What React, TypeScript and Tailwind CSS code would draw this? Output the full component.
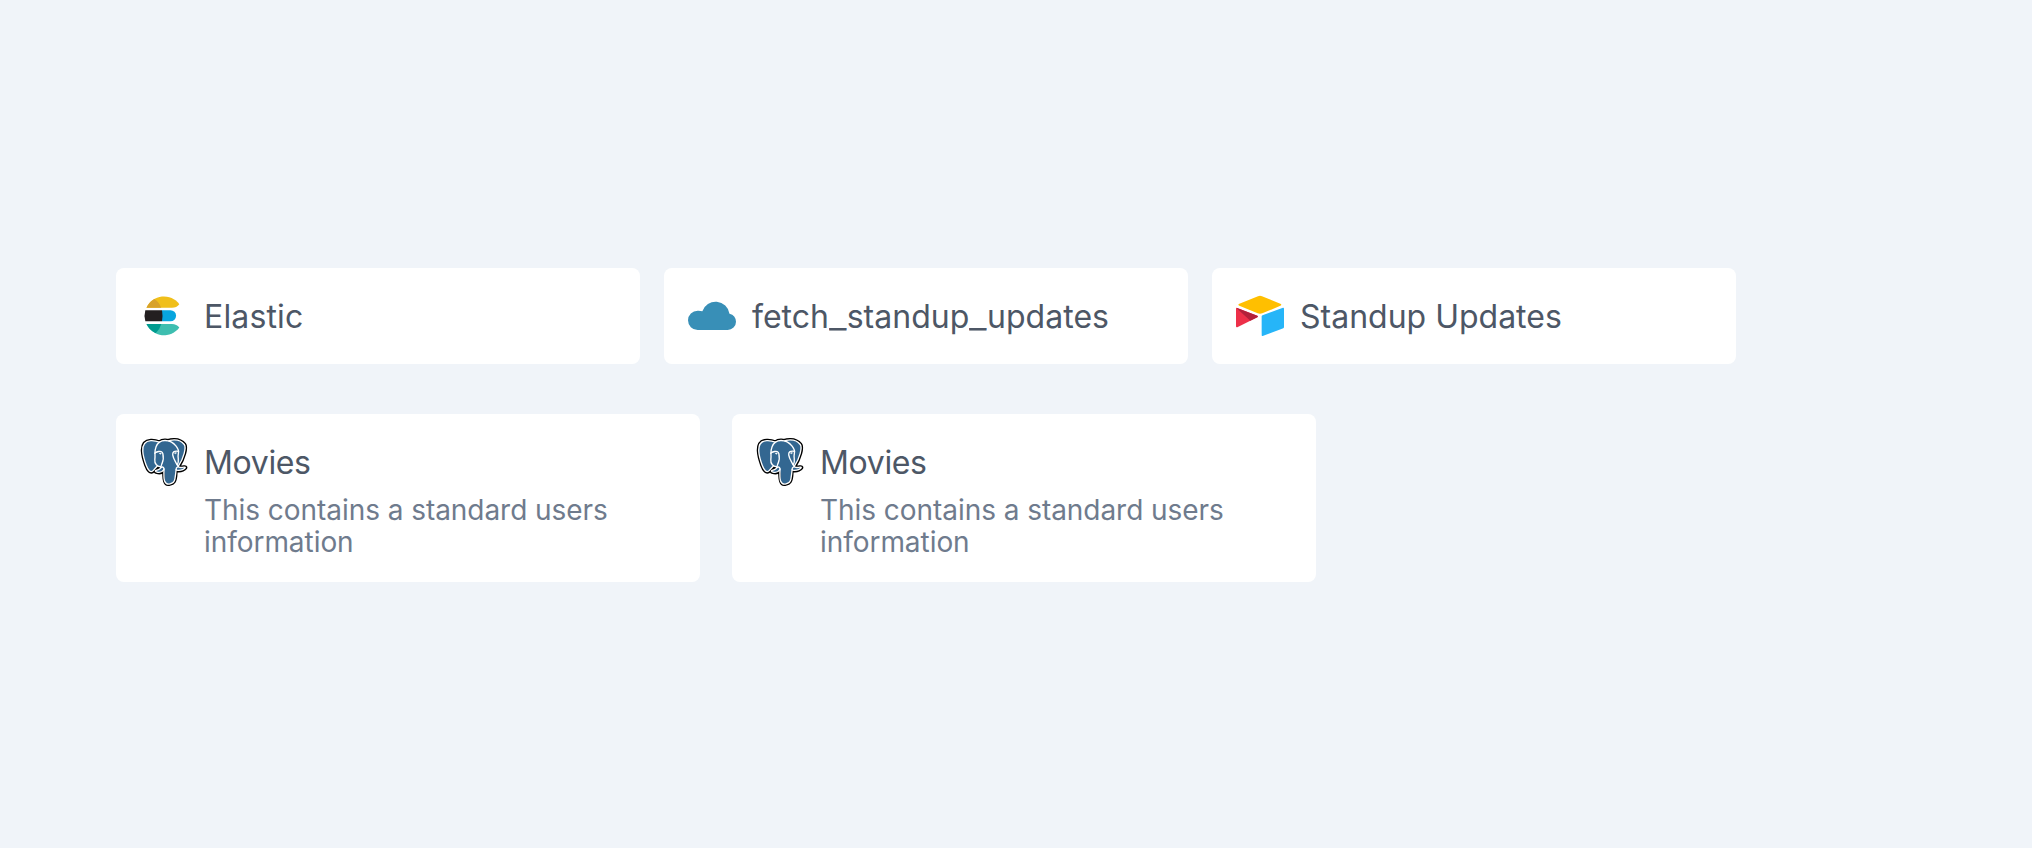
import { Fragment, type ReactNode } from "react";

function ElasticIcon() {
  return (
    <svg viewBox="30 36 144 144" className="size-12 shrink-0">
      <path d="M49.500 83A57.500 57.500 0 0 1 148 72.500Q140 83 126 83Z" fill="#f0bf1a" />
      <path d="M49.500 83A57.500 57.500 0 0 1 73 57Q88 67 93.500 83Z" fill="#d8a22a" />
      <path d="M96 90.500H121.500A16.700 16.700 0 0 1 121.500 124H96Z" fill="#07a5de" />
      <path d="M46 90.500H96Q99 107 96 124H46Q41 107 46 90.500Z" fill="#231f20" />
      <path d="M49.500 132A57.500 57.500 0 0 0 148 142.500Q140 132 126 132Z" fill="#3ebeb0" />
      <path d="M49.500 132A57.500 57.500 0 0 0 77 159.500Q89 149 94 132Z" fill="#019b8f" />
    </svg>
  );
}

function CloudIcon() {
  return (
    <svg viewBox="24 36 144 144" className="size-12 shrink-0" fill="#388fb7">
      <path d="M53 150A29 29 0 0 1 24 121A29 29 0 0 1 53 92Q60 91.500 67 94A42 42 0 0 1 148.500 101A26 26 0 0 1 168 125A25 25 0 0 1 143 150Z" />
    </svg>
  );
}

function AirtableIcon() {
  return (
    <svg viewBox="33 36 144 144" className="size-12 shrink-0">
      <path d="M99 48.500Q105 46 111 48.500L166 71.500Q172 74.500 166 77.500L112 100Q105 102.500 98 100L43 77.500Q37 74.500 43 71.500Z" fill="#ffbf00" />
      <path d="M110 109.500Q110 107 112.500 106L174 83Q177 82.500 177 85V141Q177 143.500 175 144.500L113 168Q110 169 110 166Z" fill="#26b5f8" />
      <path d="M33 86Q33 82.500 37 84L97 107.500Q101 109.500 97 112L37 141.500Q33 143 33 139Z" fill="#ed3049" />
      <path d="M35 84.500Q36 83.500 38 84.500L97 107.500Q101 109.500 97 112L76 122Z" fill="#b3213a" />
    </svg>
  );
}

function PostgresIcon() {
  return (
    <svg viewBox="0 0 432.071 445.383" className="size-12 shrink-0">
      <path
        d="M323.205,324.227c2.833-23.601,1.984-27.062,19.563-23.239l4.463,0.392c13.517,0.615,31.199-2.174,41.587-7c22.362-10.376,35.622-27.7,13.572-23.148c-50.297,10.376-53.755-6.655-53.755-6.655c53.111-78.803,75.313-178.836,56.149-203.322C352.514-5.534,262.036,26.049,260.522,26.869l-0.482,0.089c-9.938-2.062-21.06-3.294-33.554-3.496c-22.761-0.374-40.032,5.967-53.133,15.904c0,0-161.408-66.498-153.899,83.628c1.597,31.936,45.777,241.655,98.47,178.31c19.259-23.163,37.871-42.748,37.871-42.748c9.242,6.14,20.307,9.272,31.912,8.147l0.897-0.765c-0.281,2.876-0.157,5.689,0.359,9.019c-13.572,15.167-9.584,17.83-36.723,23.416c-27.457,5.659-11.326,15.734-0.797,18.367c12.768,3.193,42.305,7.716,62.268-20.224l-0.795,3.188c5.325,4.26,4.965,30.619,5.72,49.452c0.756,18.834,2.017,36.409,5.856,46.771c3.839,10.36,8.369,37.05,44.036,29.406c29.809-6.388,52.6-15.582,54.677-101.107"
        fill="#000"
        stroke="#000"
        strokeWidth="37.4"
      />
      <path
        d="M402.395,271.23c-50.302,10.376-53.76-6.655-53.76-6.655c53.111-78.808,75.313-178.843,56.153-203.326C352.547-5.532,262.073,26.049,260.552,26.867l-0.486,0.093c-9.938-2.063-21.06-3.292-33.56-3.496c-22.761-0.373-40.026,5.967-53.127,15.902c0,0-161.411-66.495-153.904,83.63c1.597,31.938,45.776,241.657,98.471,178.312c19.26-23.163,37.869-42.748,37.869-42.748c9.243,6.14,20.308,9.272,31.908,8.147l0.901-0.765c-0.28,2.876-0.152,5.689,0.361,9.019c-13.575,15.167-9.586,17.83-36.723,23.416c-27.459,5.659-11.328,15.734-0.796,18.367c12.768,3.193,42.307,7.716,62.266-20.224l-0.796,3.188c5.319,4.26,9.054,27.711,8.428,48.969c-0.626,21.259-1.044,35.854,3.147,47.254c4.191,11.4,8.368,37.05,44.042,29.406c29.809-6.388,45.256-22.942,47.405-50.555c1.525-19.631,4.976-16.729,5.194-34.28l2.768-8.309c3.192-26.611,0.507-35.196,18.872-31.203l4.463,0.392c13.517,0.615,31.208-2.174,41.591-7c22.358-10.376,35.618-27.7,13.573-23.148z"
        fill="#336791"
      />
      <g fill="none" stroke="#fff" strokeWidth="12.465" strokeLinecap="round" strokeLinejoin="round">
        <path d="M215.866,286.484c-1.385,49.516,0.348,99.377,5.193,111.495c4.848,12.118,15.223,35.688,50.9,28.045c29.806-6.39,40.651-18.756,45.357-46.051c3.466-20.082,10.148-75.854,11.005-87.281" />
        <path d="M173.104,38.256c0,0-161.521-66.016-154.012,84.109c1.597,31.938,45.779,241.664,98.473,178.316c19.256-23.166,36.671-41.335,36.671-41.335" />
        <path d="M260.349,26.207c-5.591,1.753,89.848-34.889,144.087,34.417c19.159,24.484-3.043,124.519-56.153,203.329" />
        <path d="M348.282,263.953c0,0,3.461,17.036,53.764,6.653c22.04-4.552,8.776,12.774-13.577,23.155c-18.345,8.514-59.474,10.696-60.146-1.069c-1.729-30.355,21.647-21.133,19.96-28.739c-1.525-6.85-11.979-13.573-18.894-30.338c-6.037-14.633-82.796-126.849,21.287-110.183c3.813-0.789-27.146-99.002-124.553-100.599c-97.385-1.597-94.19,119.762-94.19,119.762" />
        <path d="M188.604,274.334c-13.577,15.166-9.584,17.829-36.723,23.417c-27.459,5.66-11.326,15.733-0.797,18.365c12.768,3.195,42.307,7.718,62.266-20.229c6.078-8.509-0.036-22.086-8.385-25.547c-4.034-1.671-9.428-3.765-16.361,3.994z" />
        <path d="M187.715,274.069c-1.368-8.917,2.93-19.528,7.536-31.942c6.922-18.626,22.893-37.255,10.117-96.339c-9.523-44.029-73.396-9.163-73.436-3.193c-0.039,5.968,2.889,30.26-1.067,58.548c-5.162,36.913,23.488,68.132,56.479,64.938" />
        <path d="M350.676,123.432c0.863,15.994-3.445,26.888-3.988,43.914c-0.804,24.748,11.799,53.074-7.191,81.435" />
      </g>
      <g fill="#fff" stroke="#fff" strokeWidth="4.155">
        <path d="M172.517,141.7c-0.288,2.039,3.733,7.48,8.976,8.207c5.234,0.73,9.714-3.522,9.998-5.559c0.284-2.039-3.732-4.285-8.977-5.015c-5.237-0.731-9.719,0.333-9.996,2.367z" />
        <path d="M331.941,137.543c0.284,2.039-3.732,7.48-8.976,8.207c-5.238,0.73-9.718-3.522-10.005-5.559c-0.277-2.039,3.74-4.285,8.979-5.015c5.239-0.73,9.718,0.333,10.002,2.368z" />
      </g>
    </svg>
  );
}

/* Title text with underscores drawn slightly wider than the font's own. */
function Title({ text, tracking = "tracking-normal" }: { text: string; tracking?: string }) {
  return (
    <h2 className={`pt-px text-[32px] leading-[48px] ${tracking}`}>
      {text.split("_").map((part, i) => (
        <Fragment key={i}>
          {i > 0 && <span className="mr-[3px] inline-block origin-left scale-x-[1.2]">_</span>}
          {part}
        </Fragment>
      ))}
    </h2>
  );
}

function ResourceCard({ icon, title, tracking }: { icon: ReactNode; title: string; tracking?: string }) {
  return (
    <div className="flex h-24 w-[524px] items-start gap-4 rounded-lg bg-white p-6">
      {icon}
      <Title text={title} tracking={tracking} />
    </div>
  );
}

function DetailCard({ icon, title, description }: { icon: ReactNode; title: string; description: string }) {
  return (
    <div className="flex h-[168px] w-[584px] items-start gap-4 rounded-lg bg-white p-6">
      {icon}
      <div className="w-[420px]">
        <Title text={title} tracking="tracking-[-0.35px]" />
        <p className="mt-[7px] text-[28px] leading-8 tracking-[-0.05px] text-[#6f7b8d]">{description}</p>
      </div>
    </div>
  );
}

export default function App() {
  return (
    <main className="flex h-[848px] w-[2032px] flex-col gap-[50px] bg-[#f0f4f9] px-[116px] pt-[268px] font-['Inter',sans-serif] text-[#4d5766] antialiased">
      <section className="flex gap-6">
        <ResourceCard icon={<ElasticIcon />} title="Elastic" tracking="tracking-[0.15px]" />
        <ResourceCard icon={<CloudIcon />} title="fetch_standup_updates" tracking="tracking-[0.03px]" />
        <ResourceCard icon={<AirtableIcon />} title="Standup Updates" />
      </section>
      <section className="flex gap-8">
        <DetailCard icon={<PostgresIcon />} title="Movies" description="This contains a standard users information" />
        <DetailCard icon={<PostgresIcon />} title="Movies" description="This contains a standard users information" />
      </section>
    </main>
  );
}
